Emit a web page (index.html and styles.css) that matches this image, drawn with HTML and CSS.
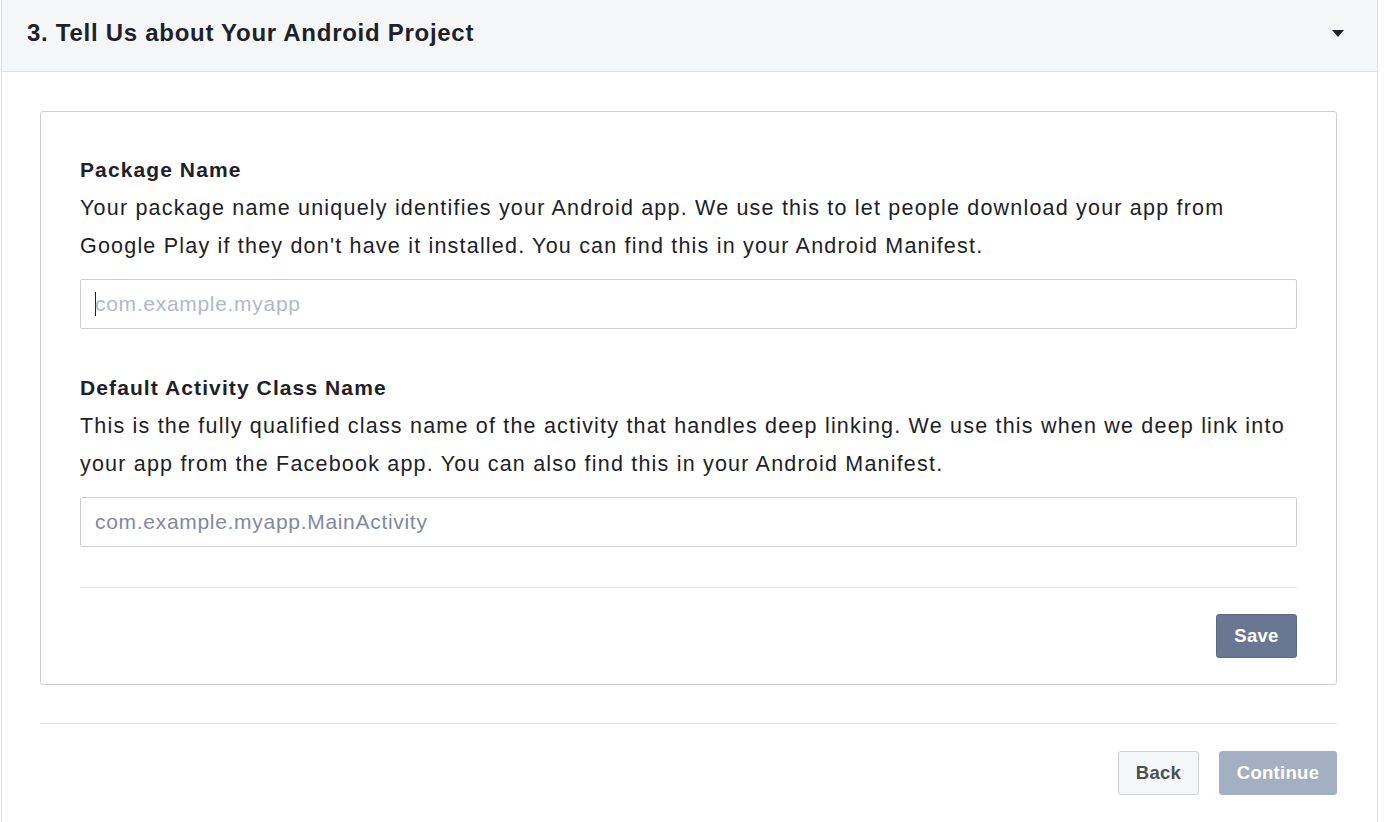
FILE: index.html
```html
<!DOCTYPE html>
<html>
<head>
<meta charset="utf-8">
<link rel="stylesheet" href="styles.css">
</head>
<body>
<div class="panel">
  <div class="panel-header">
    <h2 class="title">3. Tell Us about Your Android Project</h2>
    <svg class="caret" width="12" height="7" viewBox="0 0 12 7"><path d="M0 0 H12 L6 7 Z" fill="#1d2129"/></svg>
  </div>
  <div class="panel-body">
    <div class="card">
      <div class="field">
        <div class="label">Package Name</div>
        <div class="desc">Your package name uniquely identifies your Android app. We use this to let people download your app from Google Play if they don't have it installed. You can find this in your Android Manifest.</div>
        <div class="input focused"><span class="cursor"></span><span class="ph light">com.example.myapp</span></div>
      </div>
      <div class="field">
        <div class="label">Default Activity Class Name</div>
        <div class="desc">This is the fully qualified class name of the activity that handles deep linking. We use this when we deep link into your app from the Facebook app. You can also find this in your Android Manifest.</div>
        <div class="input"><span class="ph">com.example.myapp.MainActivity</span></div>
      </div>
      <div class="card-footer">
        <button class="btn btn-save">Save</button>
      </div>
    </div>
    <div class="footer">
      <button class="btn btn-back">Back</button>
      <button class="btn btn-continue">Continue</button>
    </div>
  </div>
</div>
</body>
</html>
```
FILE: styles.css
```css
* { box-sizing: border-box; }
html, body { margin: 0; padding: 0; background: #fff; }
body {
  font-family: "Liberation Sans", Arial, Helvetica, sans-serif;
  color: #1d2129;
  width: 1400px;
  height: 822px;
  overflow: hidden;
}
.panel {
  margin-left: 1px;
  width: 1377px;
  border-left: 1px solid #dddfe2;
  border-right: 1px solid #dddfe2;
  min-height: 822px;
}
.panel-header {
  height: 72px;
  background: #f5f6f7;
  border-bottom: 1px solid #dddfe2;
  display: flex;
  align-items: center;
  justify-content: space-between;
  padding: 0 33px 0 25px;
}
.title {
  margin: 0;
  font-size: 24px;
  letter-spacing: 0.72px;
  font-weight: bold;
  color: #1d2129;
  padding-bottom: 5px;
}
.caret { display: block; margin-bottom: 4px; }
.panel-body {
  padding: 39px 40px 0 38px;
}
.card {
  border: 1px solid #ccd0d5;
  border-radius: 3px;
  padding: 39px 39px 0 39px;
}
.field { margin-bottom: 40px; }
.label {
  font-size: 21px;
  letter-spacing: 1.1px;
  font-weight: bold;
  line-height: 38px;
}
.desc {
  font-size: 21.5px;
  letter-spacing: 1.2px;
  line-height: 38px;
}
.input {
  margin-top: 14px;
  height: 50px;
  border: 1px solid #ccd0d5;
  border-radius: 2px;
  display: flex;
  align-items: center;
  padding-left: 14px;
  font-size: 21px;
  letter-spacing: 0.7px;
}
.ph { color: #7f89a2; }
.ph.light { color: #b2b9c6; }
.cursor {
  display: block;
  width: 1px;
  height: 24px;
  background: #1d2129;
  margin-right: -1px;
}
.card-footer {
  border-top: 1px solid #e5e6e9;
  display: flex;
  justify-content: flex-end;
  padding: 26px 0 26px;
}
.btn {
  font-family: "Liberation Sans", Arial, Helvetica, sans-serif;
  font-weight: bold;
  font-size: 18.5px;
  letter-spacing: 0.3px;
  border-radius: 3px;
  height: 44px;
  border: 1px solid transparent;
  padding: 0;
}
.btn-save {
  width: 81px;
  background: #6a7793;
  border-color: #5d6981;
  color: #fff;
}
.footer {
  margin-top: 38px;
  border-top: 1px solid #dddfe2;
  display: flex;
  justify-content: flex-end;
  gap: 20px;
  padding-top: 27px;
}
.btn-back {
  width: 81px;
  background: #f5f6f7;
  border-color: #ccd0d5;
  color: #4b4f56;
}
.btn-continue {
  width: 118px;
  background: #a3afc2;
  border-color: #a3afc2;
  color: #fff;
}
```
